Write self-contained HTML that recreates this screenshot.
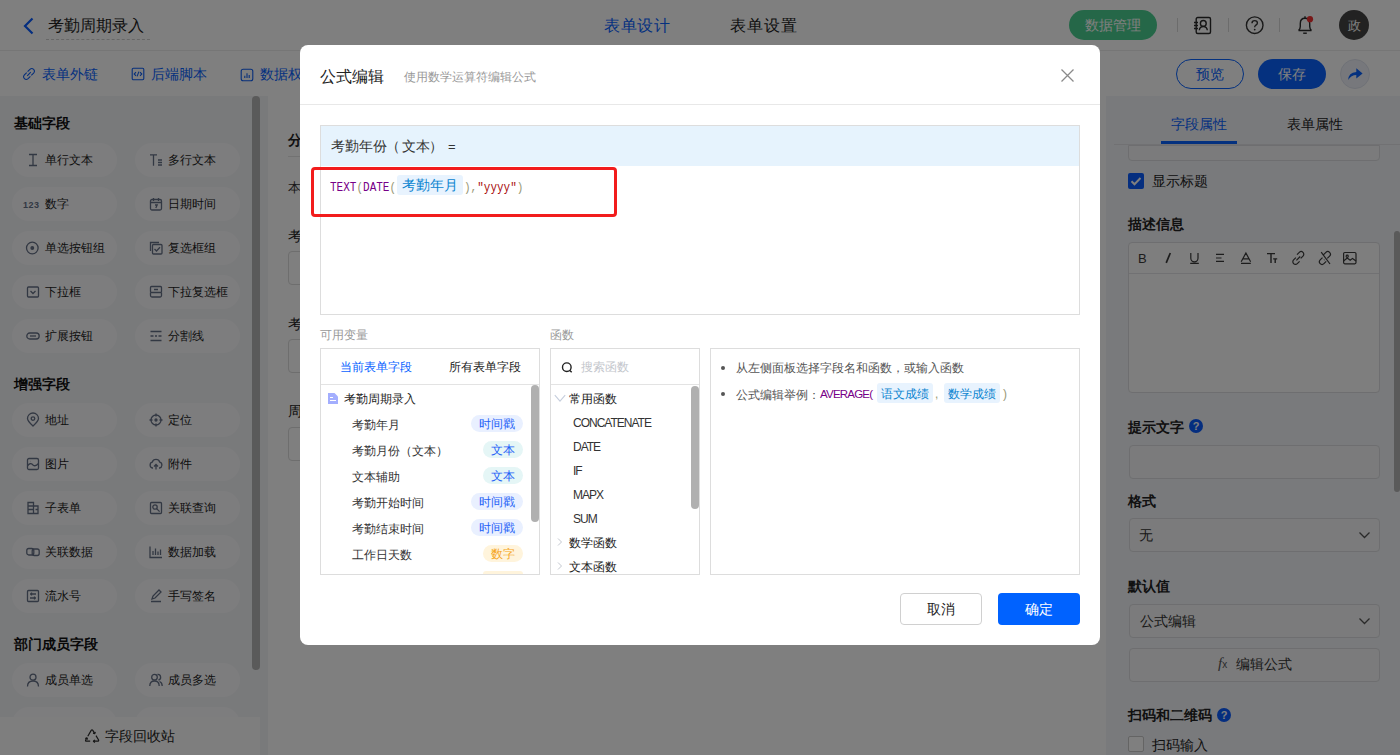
<!DOCTYPE html>
<html><head><meta charset="utf-8">
<style>
*{box-sizing:border-box;margin:0;padding:0}
html,body{width:1400px;height:755px;overflow:hidden;background:#fff;font-family:"Liberation Sans",sans-serif;color:#333}
.a{position:absolute;white-space:nowrap}
.t12{font-size:12px;line-height:12px}
.t13{font-size:13px;line-height:13px}
.t14{font-size:14px;line-height:14px}
.t16{font-size:16px;line-height:16px}
.b{font-weight:bold}
.pill{position:absolute;height:34px;width:105px;border-radius:17px;background:#fbfbfd}
.pill svg{position:absolute;left:14px;top:10px;overflow:visible}
.pill span{position:absolute;left:33px;top:11px;font-size:12px;line-height:13px;color:#222;white-space:nowrap}
.box{position:absolute;border:1px solid #dcdde0;border-radius:4px;background:#f7f7f8}
.tag{position:absolute;height:17px;border-radius:9px;font-size:12px;line-height:19px;text-align:center;color:#1f62f7}
.row{position:absolute;left:352px;font-size:12px;line-height:12px;color:#333;white-space:nowrap}
.fn{position:absolute;left:573px;font-size:12px;line-height:12px;color:#333;letter-spacing:-1px}
</style></head><body>

<!-- HEADER -->
<div class="a" style="left:0;top:0;width:1400px;height:51px;background:#fff;border-bottom:1px solid #ececec"></div>
<svg class="a" style="left:22px;top:17px" width="14" height="18" viewBox="0 0 14 18"><path d="M10.5 1.5 L3 9 L10.5 16.5" fill="none" stroke="#0a5cff" stroke-width="2.2"/></svg>
<div class="a t16" style="left:48px;top:18px;color:#222">考勤周期录入</div>
<div class="a" style="left:46px;top:39px;width:104px;height:0;border-top:1px dashed #cfcfcf"></div>
<div class="a t16" style="left:604px;top:18px;color:#0862ff;letter-spacing:0.6px">表单设计</div>
<div class="a t16" style="left:730px;top:18px;color:#222;letter-spacing:1px">表单设置</div>
<div class="a" style="left:1069px;top:10px;width:88px;height:30px;border-radius:15px;background:#4bcf91"></div>
<div class="a t14" style="left:1085px;top:18px;color:#fff">数据管理</div>
<div class="a" style="left:1177px;top:18px;width:1px;height:14px;background:#d8d8d8"></div>
<div class="a" style="left:1228px;top:18px;width:1px;height:14px;background:#d8d8d8"></div>
<div class="a" style="left:1279px;top:18px;width:1px;height:14px;background:#d8d8d8"></div>
<svg class="a" style="left:1192px;top:16px" width="20" height="19" viewBox="0 0 20 19" fill="none" stroke="#2a2a2a" stroke-width="1.4"><rect x="4.2" y="1.5" width="14.3" height="16" rx="1.5"/><path d="M2 6.5h4M2 9.5h4M2 12.5h4"/><circle cx="11.3" cy="7.4" r="2.9"/><path d="M7.3 14.2 Q7.6 10.6 11.3 10.6 Q15 10.6 15.3 14.2"/></svg>
<svg class="a" style="left:1245px;top:16px" width="20" height="20" viewBox="0 0 20 20"><circle cx="9.7" cy="9.2" r="8.3" fill="none" stroke="#333" stroke-width="1.4"/><path d="M7 7.2 Q7 4.6 9.7 4.6 Q12.4 4.6 12.4 7 Q12.4 8.6 10.4 9.5 Q9.7 9.9 9.7 11.2" fill="none" stroke="#333" stroke-width="1.4"/><circle cx="9.7" cy="13.6" r="0.9" fill="#333"/></svg>
<svg class="a" style="left:1296px;top:15px" width="20" height="20" viewBox="0 0 20 20" fill="none" stroke="#2a2a2a" stroke-width="1.4"><path d="M2.5 15.5 H15.5 M2.5 15.5 Q4.3 14 4.3 11.5 V8.5 Q4.3 3.3 9 3.3 Q13.7 3.3 13.7 8.5 V11.5 Q13.7 14 15.5 15.5"/><path d="M7.2 18.2 H10.8"/><path d="M9 1.2v2"/><circle cx="14" cy="4.2" r="3.1" fill="#f03030" stroke="none"/></svg>
<div class="a" style="left:1339px;top:10px;width:30px;height:30px;border-radius:15px;background:#454545"></div>
<div class="a t13" style="left:1348px;top:19px;color:#fff">政</div>

<!-- TOOLBAR -->
<div class="a" style="left:0;top:51px;width:1400px;height:45px;background:#fff"></div>
<svg class="a" style="left:22px;top:67px" width="14" height="14" viewBox="0 0 14 14" fill="none" stroke="#0d5ef5" stroke-width="1.1"><path d="M5.6 4.6 L7.9 2.3 Q9.9 0.6 11.6 2.4 Q13.3 4.1 11.6 6.1 L9.3 8.4"/><path d="M8.4 9.4 L6.1 11.7 Q4.1 13.4 2.4 11.6 Q0.7 9.9 2.4 7.9 L4.7 5.6"/><path d="M5.2 8.8 L8.8 5.2"/></svg>
<div class="a t14" style="left:42px;top:67px;color:#0862ff">表单外链</div>
<svg class="a" style="left:131px;top:67px" width="14" height="14" viewBox="0 0 14 14" fill="none" stroke="#0d5ef5" stroke-width="1.1"><rect x="1.2" y="1.2" width="11.6" height="11.6" rx="1.2"/><path d="M5 5.2 L3.2 7 L5 8.8 M9 5.2 L10.8 7 L9 8.8 M7.9 4.6 L6.1 9.4"/></svg>
<div class="a t14" style="left:151px;top:67px;color:#0862ff">后端脚本</div>
<svg class="a" style="left:240px;top:68px" width="14" height="14" viewBox="0 0 14 14" fill="none" stroke="#0d5ef5" stroke-width="1.1"><rect x="1.2" y="1.2" width="11.6" height="11.6" rx="2"/><path d="M4.8 10V7.8 M7 10V5.2 M9.2 10V7"/></svg>
<div class="a t14" style="left:260px;top:67px;color:#0862ff">数据权限</div>
<div class="a" style="left:1176px;top:59px;width:68px;height:30px;border-radius:15px;border:1px solid #0862ff;background:#fff"></div>
<div class="a t14" style="left:1196px;top:67px;color:#0862ff">预览</div>
<div class="a" style="left:1258px;top:59px;width:68px;height:30px;border-radius:15px;background:#0a62ff"></div>
<div class="a t14" style="left:1278px;top:67px;color:#fff">保存</div>
<div class="a" style="left:1340px;top:59px;width:30px;height:30px;border-radius:15px;background:#eef1f8;border:1px solid #dfe3ee"></div>
<svg class="a" style="left:1346px;top:65px" width="18" height="18" viewBox="0 0 18 18"><path d="M2.2 15 Q2.4 7.4 10.3 6.9 V3.2 L16.6 8.4 L10.3 13.4 V10.1 Q5.2 10.1 2.2 15 Z" fill="#0862ff"/></svg>

<!-- SIDEBAR -->
<div class="a" style="left:0;top:96px;width:268px;height:659px;background:#f3f4f7"></div>
<div class="a" style="left:252px;top:96px;width:8px;height:574px;border-radius:4px;background:#b4b4b4"></div>
<div class="a t14 b" style="left:14px;top:116px;color:#111">基础字段</div>
<div class="a t14 b" style="left:14px;top:377px;color:#111">增强字段</div>
<div class="a t14 b" style="left:14px;top:637px;color:#111">部门成员字段</div>
<div id="pills">
<div class="pill" style="left:12px;top:143px"><svg width="14" height="14" viewBox="0 0 14 14" fill="none" stroke="#657086" stroke-width="1.3"><path d="M3 1.5h8M3 12.5h8M7 1.5v11"/></svg><span>单行文本</span></div>
<div class="pill" style="left:135px;top:143px"><svg width="14" height="14" viewBox="0 0 14 14" fill="none" stroke="#657086" stroke-width="1.3"><path d="M1 1.8h7M4.5 1.8v11M9 7h4M9 9.5h4M9 12h4"/></svg><span>多行文本</span></div>
<div class="pill" style="left:12px;top:187px"><svg width="14" height="14" viewBox="0 0 14 14" fill="none" stroke="#657086" stroke-width="1.3"><text x="-3" y="10.5" textLength="16" style="font-family:'Liberation Sans';font-size:9px;font-weight:bold" fill="#657086" stroke="none">123</text></svg><span>数字</span></div>
<div class="pill" style="left:135px;top:187px"><svg width="14" height="14" viewBox="0 0 14 14" fill="none" stroke="#657086" stroke-width="1.3"><rect x="1.5" y="2.5" width="11" height="10.5" rx="1.5"/><path d="M1.5 5.5h11M4.5 1v3M9.5 1v3M6 8h2.2L6.8 11"/></svg><span>日期时间</span></div>
<div class="pill" style="left:12px;top:231px"><svg width="14" height="14" viewBox="0 0 14 14" fill="none" stroke="#657086" stroke-width="1.3"><circle cx="6.3" cy="7" r="5.8"/><circle cx="6.3" cy="7" r="1.3" fill="#657086"/></svg><span>单选按钮组</span></div>
<div class="pill" style="left:135px;top:231px"><svg width="14" height="14" viewBox="0 0 14 14" fill="none" stroke="#657086" stroke-width="1.3"><path d="M1.5 10V1.5H10"/><rect x="3.5" y="3.5" width="9.5" height="9.5" rx="1"/><path d="M5.5 8l2 2 3.5-3.8"/></svg><span>复选框组</span></div>
<div class="pill" style="left:12px;top:275px"><svg width="14" height="14" viewBox="0 0 14 14" fill="none" stroke="#657086" stroke-width="1.3"><rect x="1.5" y="2" width="11" height="10" rx="1"/><path d="M4.5 6l2.5 2.5 2.5-2.5"/></svg><span>下拉框</span></div>
<div class="pill" style="left:135px;top:275px"><svg width="14" height="14" viewBox="0 0 14 14" fill="none" stroke="#657086" stroke-width="1.3"><rect x="1.5" y="1.5" width="11" height="6" rx="1"/><path d="M1.5 7.5v3a1.5 1.5 0 0 0 1.5 1.5h8a1.5 1.5 0 0 0 1.5-1.5v-3M5 4.5h4"/></svg><span>下拉复选框</span></div>
<div class="pill" style="left:12px;top:319px"><svg width="14" height="14" viewBox="0 0 14 14" fill="none" stroke="#657086" stroke-width="1.3"><rect x="0.8" y="4" width="12.4" height="6" rx="3"/><path d="M4 7h6"/></svg><span>扩展按钮</span></div>
<div class="pill" style="left:135px;top:319px"><svg width="14" height="14" viewBox="0 0 14 14" fill="none" stroke="#657086" stroke-width="1.3"><path d="M1.5 2.5h11M1.5 7h3M6 7h2M9.5 7h3M1.5 11.5h11"/></svg><span>分割线</span></div>
<div class="pill" style="left:12px;top:403px"><svg width="14" height="14" viewBox="0 0 14 14" fill="none" stroke="#657086" stroke-width="1.3"><path d="M7 13 Q1.5 8 1.5 5.5 A5.5 5.5 0 0 1 12.5 5.5 Q12.5 8 7 13Z"/><circle cx="7" cy="5.6" r="1.8"/></svg><span>地址</span></div>
<div class="pill" style="left:135px;top:403px"><svg width="14" height="14" viewBox="0 0 14 14" fill="none" stroke="#657086" stroke-width="1.3"><circle cx="7" cy="7" r="5"/><circle cx="7" cy="7" r="1" fill="#657086"/><path d="M7 0.5v3M7 10.5v3M0.5 7h3M10.5 7h3"/></svg><span>定位</span></div>
<div class="pill" style="left:12px;top:447px"><svg width="14" height="14" viewBox="0 0 14 14" fill="none" stroke="#657086" stroke-width="1.3"><rect x="1.5" y="1.5" width="11" height="11" rx="1.5"/><path d="M1.5 9 Q4 5 7 8 Q9.5 10 12.5 6.5M4 4.5h0.2"/></svg><span>图片</span></div>
<div class="pill" style="left:135px;top:447px"><svg width="14" height="14" viewBox="0 0 14 14" fill="none" stroke="#657086" stroke-width="1.3"><path d="M4 11H3.5A3 3 0 0 1 3.2 5.2 A4 4 0 0 1 10.8 5.2 A3 3 0 0 1 10.5 11H10M7 12.5V7.5M5 9.5l2-2 2 2"/></svg><span>附件</span></div>
<div class="pill" style="left:12px;top:491px"><svg width="14" height="14" viewBox="0 0 14 14" fill="none" stroke="#657086" stroke-width="1.3"><path d="M2 1.5h5.5v11H2zM7.5 5h4.5v7.5H7.5M2 5h5.5M2 8.5h5.5M9.5 8.5h2.5"/></svg><span>子表单</span></div>
<div class="pill" style="left:135px;top:491px"><svg width="14" height="14" viewBox="0 0 14 14" fill="none" stroke="#657086" stroke-width="1.3"><rect x="1.5" y="1.5" width="11" height="11" rx="1"/><circle cx="6" cy="6" r="2.2"/><path d="M7.6 7.6l3 3"/></svg><span>关联查询</span></div>
<div class="pill" style="left:12px;top:535px"><svg width="14" height="14" viewBox="0 0 14 14" fill="none" stroke="#657086" stroke-width="1.3"><rect x="0.8" y="3.5" width="7" height="6.5" rx="2"/><rect x="6.2" y="4" width="7" height="6.5" rx="2"/></svg><span>关联数据</span></div>
<div class="pill" style="left:135px;top:535px"><svg width="14" height="14" viewBox="0 0 14 14" fill="none" stroke="#657086" stroke-width="1.3"><path d="M1 1.5v11h12M4 10V6M6.5 10V3.5M9 10V6.5M11.5 10V4.5"/></svg><span>数据加载</span></div>
<div class="pill" style="left:12px;top:579px"><svg width="14" height="14" viewBox="0 0 14 14" fill="none" stroke="#657086" stroke-width="1.3"><rect x="1.5" y="1.5" width="11" height="11" rx="1"/><path d="M4 5h6M4 9h6M5.5 3.5v3M8.5 7.5v3"/></svg><span>流水号</span></div>
<div class="pill" style="left:135px;top:579px"><svg width="14" height="14" viewBox="0 0 14 14" fill="none" stroke="#657086" stroke-width="1.3"><path d="M2 12.5h10M3 10l1-3 6-6 2 2-6 6z"/></svg><span>手写签名</span></div>
<div class="pill" style="left:12px;top:663px"><svg width="14" height="14" viewBox="0 0 14 14" fill="none" stroke="#657086" stroke-width="1.3"><circle cx="7" cy="4.2" r="3"/><path d="M1.5 13.5 Q1.5 8 7 8 Q12.5 8 12.5 13.5"/></svg><span>成员单选</span></div>
<div class="pill" style="left:135px;top:663px"><svg width="14" height="14" viewBox="0 0 14 14" fill="none" stroke="#657086" stroke-width="1.3"><circle cx="5.5" cy="4.2" r="2.8"/><path d="M0.8 13 Q0.8 8 5.5 8 Q10.2 8 10.2 13M8.5 1.5 A2.8 2.8 0 0 1 9.5 7M10.5 8.5 Q13.2 9.5 13.2 13"/></svg><span>成员多选</span></div>
<div class="pill" style="left:12px;top:707px"></div>
<div class="pill" style="left:135px;top:707px"></div>
</div><!--/pills-->
<div class="a" style="left:0;top:717px;width:260px;height:38px;background:#fdfdfd"></div>
<svg class="a" style="left:84px;top:728px" width="16" height="16" viewBox="0 0 16 16" fill="none" stroke="#2a2a2a" stroke-width="1.2" stroke-linejoin="round"><path d="M3.8 8.2 L7.2 2.4 Q8 1.2 8.8 2.4 L10.6 5.4"/><path d="M9 5.2 L10.8 5.6 L11.3 3.8"/><path d="M12 7.6 L14.6 12 Q15 13.2 13.6 13.2 H9.5"/><path d="M10.9 11.9 L9.4 13.2 L10.9 14.5"/><path d="M6.2 13.2 H2.5 Q1.1 13.2 1.7 12 L2.8 10"/><path d="M1.3 10.6 L2.9 9.8 L3.6 11.5"/></svg>
<div class="a t14" style="left:105px;top:729px;color:#222">字段回收站</div>

<!-- CANVAS -->
<div class="a" style="left:268px;top:96px;width:838px;height:659px;background:#fff"></div>
<div class="a t14 b" style="left:288px;top:133px;color:#222">分组标题</div>
<div class="a" style="left:288px;top:156px;width:800px;height:1px;background:#e5e5e5"></div>
<div class="a t13" style="left:288px;top:181px;color:#333">本表单</div>
<div class="a t14" style="left:288px;top:229px;color:#222">考勤年月</div>
<div class="a" style="left:288px;top:251px;width:400px;height:34px;border:1px solid #dcdcdc;border-radius:4px"></div>
<div class="a t14" style="left:288px;top:317px;color:#222">考勤月份</div>
<div class="a" style="left:288px;top:339px;width:400px;height:34px;border:1px solid #dcdcdc;border-radius:4px"></div>
<div class="a t14" style="left:288px;top:404px;color:#222">周期</div>
<div class="a" style="left:288px;top:427px;width:400px;height:34px;border:1px solid #dcdcdc;border-radius:4px"></div>

<!-- RIGHT PANEL -->
<div class="a" style="left:1106px;top:96px;width:294px;height:659px;background:#f2f4f8"></div>
<div id="right">
<div class="a t14" style="left:1171px;top:117px;color:#0862ff">字段属性</div>
<div class="a t14" style="left:1287px;top:117px;color:#222">表单属性</div>
<div class="a" style="left:1114px;top:144px;width:286px;height:1px;background:#e2e3e6"></div>
<div class="a" style="left:1128px;top:145px;width:252px;height:16px;border:1px solid #dcdde0;border-radius:0 0 4px 4px;background:#f7f7f8"></div>
<div class="a" style="left:1161px;top:141px;width:76px;height:3px;background:#0862ff"></div>
<div class="a" style="left:1128px;top:173px;width:16px;height:16px;border-radius:2px;background:#0a5cff"></div>
<svg class="a" style="left:1128px;top:173px" width="16" height="16" viewBox="0 0 16 16"><path d="M3.5 8.2l3 3 6-6.2" fill="none" stroke="#fff" stroke-width="2"/></svg>
<div class="a t14" style="left:1152px;top:174px;color:#222">显示标题</div>
<div class="a t14 b" style="left:1128px;top:217px;color:#222">描述信息</div>
<div class="a" style="left:1128px;top:242px;width:252px;height:151px;border:1px solid #dcdde0;border-radius:4px;background:#fcfcfc"></div>
<div class="a" style="left:1129px;top:273px;width:250px;height:1px;background:#e2e3e6"></div>
<svg class="a" style="left:1130px;top:248px" width="240" height="22" viewBox="0 0 240 22" fill="none" stroke="#3a3a3a" stroke-width="1.2">
<text x="8" y="15" font-size="13" font-family="Liberation Sans" fill="#3a3a3a" stroke="none">B</text>
<path d="M40.3 5 L36.2 14.8" stroke-width="1.7"/>
<path d="M60.8 5v5.3a3.6 3.6 0 0 0 7.2 0V5M60.2 15.4h8.6"/>
<path d="M86 6.3h8M86 10h5.5M86 13.3h8"/>
<path d="M111.2 13.7L115.9 5l4.7 8.7M112.8 10.9h6.2M111 15.4h9.8" />
<path d="M137 5.6h8M141 5.6V15M143.2 10.9h4M145.2 10.9V15" stroke-width="1.4"/>
<path d="M165.9 9.6l-2.3 2.3a2.6 2.6 0 0 0 3.7 3.7l2.3-2.3M170.7 10.4l2.3-2.3a2.6 2.6 0 0 0-3.7-3.7l-2.3 2.3M166.4 12.3l3.8-3.8"/>
<path d="M192.5 9.6l-2.3 2.3a2.6 2.6 0 0 0 3.7 3.7l2.3-2.3M197.3 10.4l2.3-2.3a2.6 2.6 0 0 0-3.7-3.7l-2.3 2.3M191.2 4.2l8.8 11.8M194 12l0.4-0.4"/>
<rect x="213.6" y="4.5" width="12.4" height="11.3" rx="1.2"/><path d="M213.6 13l3.6-3 3 2.2 2.3-1.8 3.5 2.6"/><circle cx="217.2" cy="8.3" r="1.1"/>
</svg>
<div class="a t14 b" style="left:1128px;top:420px;color:#222">提示文字</div>
<div class="a" style="left:1189px;top:419px;width:14px;height:14px;border-radius:7px;background:#0a5cff;color:#fff;font-size:11px;line-height:14px;text-align:center;font-weight:bold">?</div>
<div class="box" style="left:1129px;top:445px;width:251px;height:34px"></div>
<div class="a t14 b" style="left:1128px;top:494px;color:#222">格式</div>
<div class="box" style="left:1129px;top:518px;width:251px;height:34px"></div>
<div class="a t14" style="left:1139px;top:528px;color:#333">无</div>
<svg class="a" style="left:1358px;top:530px" width="13" height="10" viewBox="0 0 13 10"><path d="M1.5 2.5l5 5 5-5" fill="none" stroke="#555" stroke-width="1.3"/></svg>
<div class="a t14 b" style="left:1128px;top:579px;color:#222">默认值</div>
<div class="box" style="left:1129px;top:604px;width:251px;height:34px"></div>
<div class="a t14" style="left:1140px;top:614px;color:#333">公式编辑</div>
<svg class="a" style="left:1358px;top:616px" width="13" height="10" viewBox="0 0 13 10"><path d="M1.5 2.5l5 5 5-5" fill="none" stroke="#555" stroke-width="1.3"/></svg>
<div class="box" style="left:1129px;top:648px;width:251px;height:34px"></div>
<div class="a" style="left:1218px;top:655px;font-family:'Liberation Serif',serif;font-style:italic;font-size:15px;line-height:16px;color:#555">f<span style="font-size:10px;font-style:normal;font-family:'Liberation Sans'">x</span></div>
<div class="a t14" style="left:1236px;top:657px;color:#333">编辑公式</div>
<div class="a t14 b" style="left:1128px;top:708px;color:#222">扫码和二维码</div>
<div class="a" style="left:1217px;top:708px;width:14px;height:14px;border-radius:7px;background:#0a5cff;color:#fff;font-size:11px;line-height:14px;text-align:center;font-weight:bold">?</div>
<div class="a" style="left:1128px;top:736px;width:16px;height:16px;border:1px solid #c8c8c8;border-radius:2px;background:#fff"></div>
<div class="a t14" style="left:1152px;top:738px;color:#222">扫码输入</div>
<div class="a" style="left:1394px;top:231px;width:6px;height:261px;border-radius:3px;background:#b4b4b4"></div>
</div><!--/right-->

<!-- OVERLAY -->
<div class="a" style="left:0;top:0;width:1400px;height:755px;background:rgba(0,0,0,0.5)"></div>

<!-- MODAL -->
<div class="a" style="left:300px;top:45px;width:800px;height:600px;background:#fff;border-radius:8px"></div>
<div id="modal">
<div class="a t16" style="left:320px;top:69px;color:#222">公式编辑</div>
<div class="a t12" style="left:404px;top:71px;color:#999">使用数学运算符编辑公式</div>
<svg class="a" style="left:1059px;top:67px" width="17" height="17" viewBox="0 0 17 17"><path d="M2.5 2.5l12 12M14.5 2.5l-12 12" stroke="#8a8a8a" stroke-width="1.3"/></svg>
<div class="a" style="left:300px;top:104px;width:800px;height:1px;background:#e8e8e8"></div>
<div class="a" style="left:320px;top:125px;width:760px;height:190px;border:1px solid #dddddd"></div>
<div class="a" style="left:321px;top:126px;width:758px;height:40px;background:#e6f3fd"></div>
<div class="a" style="left:331px;top:140px;font-size:13.5px;line-height:13px;color:#333">考勤年份</div><div class="a" style="left:386px;top:140px;font-size:13.5px;line-height:13px;color:#333">（</div><div class="a" style="left:401.5px;top:140px;font-size:13.5px;line-height:13px;color:#333">文本</div><div class="a" style="left:428.5px;top:140px;font-size:13.5px;line-height:13px;color:#333">）</div><div class="a t13" style="left:448px;top:140px;color:#333">=</div>
<div class="a" style="left:330px;top:182px;font-family:'Liberation Mono',monospace;font-size:12px;line-height:12px;transform:scaleX(0.917);transform-origin:0 0;color:#997"><span style="color:#708">TEXT</span>(<span style="color:#708">DATE</span>(</div>
<div class="a" style="left:397px;top:175px;width:66px;height:20px;border-radius:3px;background:#e8f3fe"></div>
<div class="a t14" style="left:402px;top:178px;color:#0a84d0">考勤年月</div>
<div class="a" style="left:464px;top:182px;font-family:'Liberation Mono',monospace;font-size:12px;line-height:12px;transform:scaleX(0.917);transform-origin:0 0;color:#997">),<span style="color:#a11">"yyyy"</span>)</div>
<div class="a" style="left:311px;top:167px;width:306px;height:50px;border:3px solid #f21c1c;border-radius:4px"></div>

<div class="a t12" style="left:320px;top:329px;color:#999">可用变量</div>
<div class="a t12" style="left:550px;top:329px;color:#999">函数</div>

<div class="a" style="left:320px;top:348px;width:220px;height:227px;border:1px solid #dddddd"></div>
<div class="a" style="left:321px;top:384px;width:218px;height:1px;background:#e3e3e3"></div>
<div class="a t12" style="left:340px;top:361px;color:#0862ff">当前表单字段</div>
<div class="a t12" style="left:449px;top:361px;color:#222">所有表单字段</div>
<div class="a" style="left:531px;top:385px;width:8px;height:137px;border-radius:4px;background:#b0b0b0"></div>
<svg class="a" style="left:328px;top:393px" width="10" height="11" viewBox="0 0 10 11"><path d="M0 0H6.5L10 3.5V11H0Z" fill="#a3aefe"/><path d="M2 4.5H5M2 7.5H8" stroke="#fff" stroke-width="1.1"/></svg>
<div class="a t12" style="left:344px;top:393px;color:#222">考勤周期录入</div>
<div class="row" style="top:419px">考勤年月</div>
<div class="row" style="top:445px">考勤月份（文本）</div>
<div class="row" style="top:471px">文本辅助</div>
<div class="row" style="top:497px">考勤开始时间</div>
<div class="row" style="top:523px">考勤结束时间</div>
<div class="row" style="top:549px">工作日天数</div>
<div class="tag" style="left:471px;top:415px;width:52px;background:#e9f0ff">时间戳</div>
<div class="tag" style="left:483px;top:441px;width:40px;background:#e5f6f6">文本</div>
<div class="tag" style="left:483px;top:467px;width:40px;background:#e5f6f6">文本</div>
<div class="tag" style="left:471px;top:493px;width:52px;background:#e9f0ff">时间戳</div>
<div class="tag" style="left:471px;top:519px;width:52px;background:#e9f0ff">时间戳</div>
<div class="tag" style="left:483px;top:545px;width:40px;background:#fff4dc;color:#f5a623">数字</div>
<div class="a" style="left:483px;top:571px;width:40px;height:3px;border-radius:3px 3px 0 0;background:#fff4dc"></div>

<div class="a" style="left:550px;top:348px;width:150px;height:227px;border:1px solid #dddddd"></div>
<div class="a" style="left:551px;top:384px;width:148px;height:1px;background:#e3e3e3"></div>
<svg class="a" style="left:560px;top:361px" width="14" height="14" viewBox="0 0 14 14"><circle cx="6.8" cy="6.2" r="4.3" fill="none" stroke="#222" stroke-width="1.4"/><path d="M9.8 9.4l1.9 1.9" stroke="#222" stroke-width="1.4"/></svg>
<div class="a t12" style="left:581px;top:361px;color:#c3c6cc">搜索函数</div>
<div class="a" style="left:691px;top:386px;width:8px;height:123px;border-radius:4px;background:#b0b0b0"></div>
<svg class="a" style="left:554px;top:394px" width="12" height="10" viewBox="0 0 12 10"><path d="M0.8 1.2l5.2 6 5.2-6" fill="none" stroke="#c6cedd" stroke-width="1.1"/></svg>
<div class="a t12" style="left:569px;top:393px;color:#222">常用函数</div>
<div class="fn" style="top:417px">CONCATENATE</div>
<div class="fn" style="top:441px">DATE</div>
<div class="fn" style="top:465px">IF</div>
<div class="fn" style="top:489px">MAPX</div>
<div class="fn" style="top:513px">SUM</div>
<svg class="a" style="left:556px;top:537px" width="8" height="10" viewBox="0 0 8 10"><path d="M2 1.5l3.5 3.5L2 8.5" fill="none" stroke="#c4c8d0" stroke-width="1"/></svg>
<div class="a t12" style="left:569px;top:537px;color:#222">数学函数</div>
<svg class="a" style="left:556px;top:561px" width="8" height="10" viewBox="0 0 8 10"><path d="M2 1.5l3.5 3.5L2 8.5" fill="none" stroke="#c4c8d0" stroke-width="1"/></svg>
<div class="a" style="left:569px;top:561px;width:60px;height:12px;overflow:hidden;font-size:12px;line-height:12px;color:#222">文本函数</div>

<div class="a" style="left:710px;top:348px;width:370px;height:227px;border:1px solid #dddddd"></div>
<div class="a" style="left:721px;top:366px;width:4px;height:4px;border-radius:2px;background:#555"></div>
<div class="a" style="left:721px;top:392px;width:4px;height:4px;border-radius:2px;background:#555"></div>
<div class="a t12" style="left:736px;top:362px;color:#555">从左侧面板选择字段名和函数，或输入函数</div>
<div class="a t12" style="left:736px;top:389px;color:#555">公式编辑举例：</div>
<div class="a" style="left:820px;top:388px;font-size:11.5px;line-height:12px;color:#708;letter-spacing:-0.8px">AVERAGE(</div>
<div class="a" style="left:877px;top:383px;width:56px;height:20px;border-radius:3px;background:#e8f3fe"></div>
<div class="a t12" style="left:881px;top:388px;color:#0a84d0">语文成绩</div>
<div class="a t12" style="left:935px;top:388px;color:#997">,</div>
<div class="a" style="left:944px;top:383px;width:56px;height:20px;border-radius:3px;background:#e8f3fe"></div>
<div class="a t12" style="left:948px;top:388px;color:#0a84d0">数学成绩</div>
<div class="a t12" style="left:1003px;top:388px;color:#997">)</div>

<div class="a" style="left:900px;top:593px;width:82px;height:32px;border:1px solid #d0d0d0;border-radius:4px;background:#fff"></div>
<div class="a t14" style="left:927px;top:602px;color:#222">取消</div>
<div class="a" style="left:998px;top:593px;width:82px;height:32px;border-radius:4px;background:#0062ff"></div>
<div class="a t14" style="left:1025px;top:602px;color:#fff">确定</div>
</div><!--/modal-->

</body></html>
